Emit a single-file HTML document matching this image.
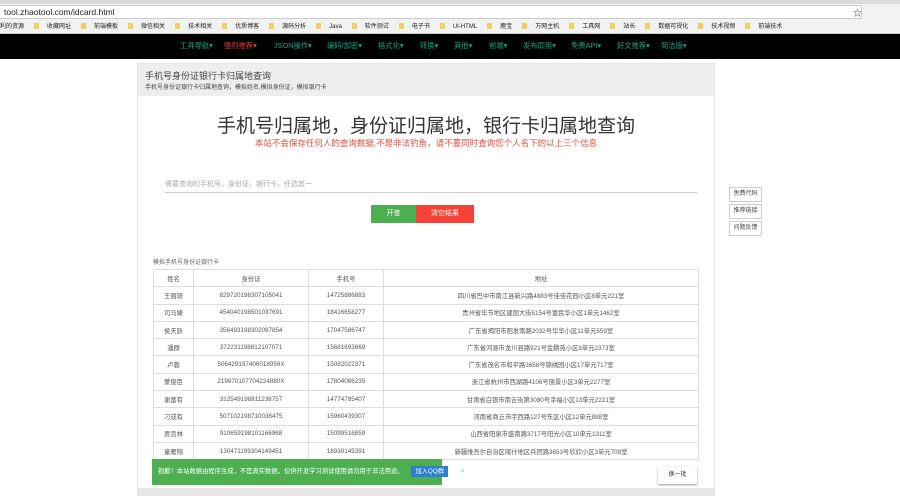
<!DOCTYPE html><html><head><meta charset="utf-8"><style>
*{margin:0;padding:0;box-sizing:border-box}
html,body{width:900px;height:496px;overflow:hidden}
body{background:#fff;font-family:"Liberation Sans","Noto Sans CJK SC",sans-serif;font-size:7px;color:#333;position:relative}
.tabs{position:absolute;top:0;left:0;width:900px;height:4px;background:#dcdcdc}
.addr{position:absolute;top:4px;left:0;width:900px;height:16px;background:#f2f2f2}
.addr .in{position:absolute;left:0;top:1px;width:862px;height:14px;background:#fff;border:1px solid #ccc;border-left:none;font-size:8.5px;line-height:12px;padding-left:4px;color:#222}
.bm{position:absolute;top:20px;left:0;width:900px;height:14px;background:#f2f2f2;font-size:6px;line-height:14px;white-space:nowrap;color:#222;border-bottom:1px solid #ccc}
.bm span{display:inline-block;margin-right:10px}
.bm i{display:inline-block;width:5px;height:6px;background:#f0d060;margin-right:8px;vertical-align:-1px}
.nav{position:absolute;top:34px;left:0;width:900px;height:25px;background:#000;font-size:7.3px;line-height:23px;color:#1aa37e;white-space:nowrap}
.nav span{position:absolute;top:0}
.panel{position:absolute;left:137px;top:63px;width:578px;height:433px;border:1px solid #e5e5e5;border-bottom:none;background:#fff}
.ph{height:32px;background:#eee;padding:5px 7px}
.ph b{font-weight:normal;font-size:9px;color:#444;display:block}
.ph small{font-size:6px;color:#444}
h1{position:absolute;left:0;width:100%;top:47px;text-align:center;font-weight:normal;font-size:19px;color:#333}
.warn{position:absolute;top:73px;width:100%;text-align:center;color:#e84c3d;font-size:8.5px}
.inp{position:absolute;left:27px;top:115px;width:532px;height:14px;border-bottom:1px solid #ccc;color:#aaa;font-size:7px}
.b1{position:absolute;left:233px;top:141px;width:45px;height:18px;background:#4caf50;color:#fff;text-align:center;line-height:18px;font-size:7px}
.b2{position:absolute;left:278px;top:141px;width:58px;height:18px;background:#f44336;color:#fff;text-align:center;line-height:18px;font-size:7px}
.cap{position:absolute;left:15px;top:193px;font-size:6px;color:#666}
table{position:absolute;left:15px;top:205px;width:546px;border-collapse:collapse;font-size:6.3px;color:#555}
td,th{border:1px solid #ddd;height:17.3px;text-align:center;font-weight:normal}
.toast{position:absolute;left:152px;top:459px;width:290px;height:26px;background:#4caf50;color:#fff;font-size:6.3px;line-height:26px;padding-left:6px;white-space:nowrap}
.toast em{font-style:normal;display:inline-block;background:#2a7fd4;padding:0 4px;line-height:11px;margin-left:6px}
.hy{position:absolute;left:658px;top:467px;width:39px;height:17px;background:#fff;box-shadow:0 1px 2px #999;text-align:center;line-height:17px;font-size:6px}
.side{position:absolute;left:729px;width:33px;height:15px;border:1px solid #ccc;background:#fff;font-size:6px;text-align:center;line-height:13px;color:#444}
.foot{position:absolute;left:137px;top:488px;width:578px;height:8px;background:#e6e6e6}
</style></head><body>
<div class="tabs"></div>
<div class="addr"><div class="in">tool.zhaotool.com/idcard.html</div><span style="position:absolute;left:853px;top:2px;font-size:9px">☆</span></div>
<div class="bm"><span>利的资源</span><i></i><span>收藏网址</span><i></i><span>前端模板</span><i></i><span>微信相关</span><i></i><span>技术相关</span><i></i><span>优质博客</span><i></i><span>源码分析</span><i></i><span>Java</span><i></i><span>软件测试</span><i></i><span>电子书</span><i></i><span>UI-HTML</span><i></i><span>鹿宝</span><i></i><span>万网主机</span><i></i><span>工具网</span><i></i><span>站长</span><i></i><span>数据可视化</span><i></i><span>技术视频</span><i></i><span>前端技术</span></div>
<div class="nav"><span style="left:180px">工具导航▾</span><span style="left:224px;color:#e53935">强烈推荐▾</span><span style="left:274px">JSON操作▾</span><span style="left:327px">编码/加密▾</span><span style="left:378px">格式化▾</span><span style="left:420px">转换▾</span><span style="left:454px">其他▾</span><span style="left:489px">前端▾</span><span style="left:523px">发布即用▾</span><span style="left:571px">免费API▾</span><span style="left:617px">好文推荐▾</span><span style="left:661px">简洁版▾</span></div>
<div class="panel">
<div class="ph"><b>手机号身份证银行卡归属地查询</b><small>手机号身份证银行卡归属地查询，模拟姓名,模拟身份证，模拟银行卡</small></div>
<h1>手机号归属地，身份证归属地，银行卡归属地查询</h1>
<div class="warn">本站不会保存任何人的查询数据,不是非法钓鱼，请不要同时查询您个人名下的以上三个信息</div>
<div class="inp">需要查询的手机号，身份证，银行卡，任选其一</div>
<div class="b1">开查</div><div class="b2">清空结果</div>
<div class="cap">模拟手机号身份证银行卡</div>
<table>
<tr><th style="width:40px">姓名</th><th style="width:115px">身份证</th><th style="width:75px">手机号</th><th>地址</th></tr>
<tr><td>王丽琦</td><td>829720198307105041</td><td>14725886883</td><td>四川省巴中市南江县新兴路4883号佳佳花园小区8单元221室</td></tr>
<tr><td>司马婕</td><td>454040198501037691</td><td>18416658277</td><td>贵州省毕节地区建国大街5154号富民华小区1单元1462室</td></tr>
<tr><td>侯天跃</td><td>356493198302097854</td><td>17047586747</td><td>广东省揭阳市阳发南路2032号华华小区11单元559室</td></tr>
<tr><td>潘群</td><td>372231198812107071</td><td>15681693669</td><td>广东省河源市龙川县路921号金鹏苑小区8单元2373室</td></tr>
<tr><td>卢蓉</td><td>506429197406018959X</td><td>15082022371</td><td>广东省茂名市和平路3658号锦绣园小区17单元717室</td></tr>
<tr><td>蒙俊臣</td><td>219870107704224880X</td><td>17804086235</td><td>浙江省杭州市西湖路4106号丽景小区3单元2277室</td></tr>
<tr><td>谢富有</td><td>312549198811238757</td><td>14774785407</td><td>甘肃省白银市南吉街第3080号幸福小区13单元2221室</td></tr>
<tr><td>刁成有</td><td>507102198710036475</td><td>15960439307</td><td>河南省商丘市宇西路127号东区小区12单元888室</td></tr>
<tr><td>贾且林</td><td>910659198101166968</td><td>15099516859</td><td>山西省阳泉市盛南路3717号阳光小区10单元1311室</td></tr>
<tr><td>童雁翔</td><td>130471199304149451</td><td>18930145391</td><td>新疆维吾尔自治区喀什地区兵团路3653号欣欣小区3单元709室</td></tr>
</table>
</div>
<div class="side" style="top:187px">免费代码</div>
<div class="side" style="top:204px">推荐链接</div>
<div class="side" style="top:221px">问题反馈</div>
<div class="toast">抱歉！本站数据由程序生成，不是真实数据，仅供开发学习测试使用请勿用于非法用途。 <em>加入QQ群</em> <span style="margin-left:10px;color:#9ed69f">✕</span></div>
<div class="hy">换一批</div>
<div class="foot"></div>
</body></html>
